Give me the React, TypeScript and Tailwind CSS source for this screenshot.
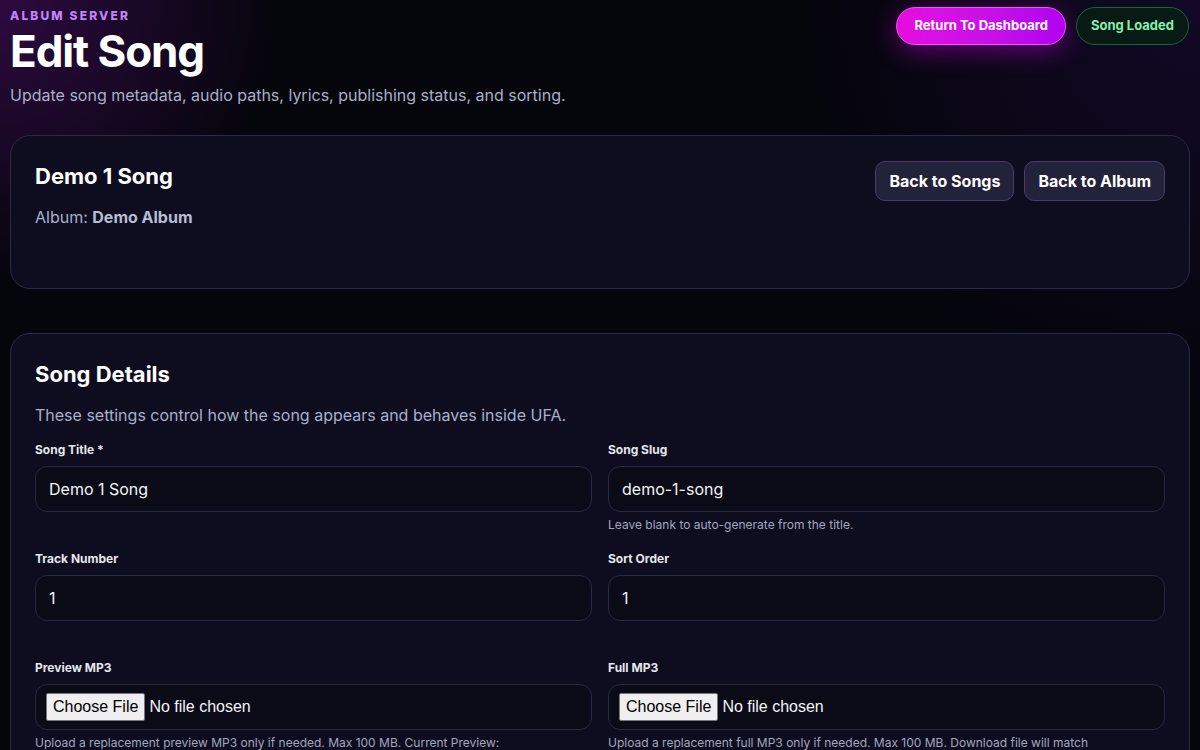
import React from "react";

const Field = ({ label, value, hint }: { label: string; value: string; hint?: string }) => (
  <div className="flex flex-col">
    <label className="text-[12px] font-bold text-[#e5e7eb] mb-[7px]">{label}</label>
    <div className="h-[46px] rounded-xl border border-[#262a40] bg-[#0a0b16] px-[13px] flex items-center text-[16px] text-[#f3f4f6]">
      {value}
    </div>
    {hint && <p className="text-[12px] text-[#a1a6bd] mt-[4px]">{hint}</p>}
  </div>
);

const FileField = ({ label, hint }: { label: string; hint: string }) => (
  <div className="flex flex-col">
    <label className="text-[12px] font-bold text-[#e5e7eb] mb-[7px]">{label}</label>
    <div className="h-[46px] rounded-xl border border-[#262a40] bg-[#0a0b16] px-[10px] flex items-center text-[16px] text-[#f3f4f6]" style={{ fontFamily: "'Liberation Sans', Arial, sans-serif" }}>
      <span className="bg-[#efefef] text-black border border-[#767676] rounded-[2px] px-[6px] py-[1px] mr-[4px]">Choose File</span>
      No file chosen
    </div>
    <p className="text-[12px] text-[#a1a6bd] mt-[4px] whitespace-nowrap overflow-hidden">{hint}</p>
  </div>
);

export default function App() {
  return (
    <div
      className="min-h-[750px] h-[750px] overflow-hidden bg-[#05050c] px-[10px] text-white"
      style={{
        fontFamily: "Inter, 'Noto Sans', sans-serif",
        backgroundImage:
          "radial-gradient(circle at 0% 0%, rgba(120,20,160,0.35), transparent 280px), radial-gradient(circle at 100% 0%, rgba(60,20,120,0.25), transparent 400px)",
      }}
    >
      <header className="flex justify-between items-start pt-[7px]">
        <div>
          <div className="text-[12px] font-extrabold tracking-[0.18em] text-[#c084fc]">ALBUM SERVER</div>
          <h1 className="text-[44px] font-bold leading-[52px] tracking-tight mt-[0px]">Edit Song</h1>
          <p className="text-[16px] text-[#a9b0c8] mt-[6px]">Update song metadata, audio paths, lyrics, publishing status, and sorting.</p>
        </div>
        <div className="flex gap-[10px] pt-[0px] mr-[1px]">
          <button className="h-[38px] px-[17px] rounded-full bg-gradient-to-r from-[#e60be0] to-[#b000f0] border border-[#f052f5] text-[13px] font-bold shadow-[0_6px_24px_rgba(200,0,220,0.45)]">
            Return To Dashboard
          </button>
          <button className="h-[38px] px-[14px] rounded-full bg-[#081a14] border border-[#166534] text-[13px] font-bold text-[#86efac]">
            Song Loaded
          </button>
        </div>
      </header>

      <section className="mt-[28px] h-[154px] rounded-[20px] border border-[#2a2a44] bg-[#0e0d20] px-[24px] pt-[24px] flex justify-between items-start">
        <div>
          <h2 className="text-[22px] font-bold">Demo 1 Song</h2>
          <p className="text-[16px] text-[#a9b0c8] mt-[12px]">
            Album: <strong className="font-bold text-[#b7bdd2]">Demo Album</strong>
          </p>
        </div>
        <div className="flex gap-[10px] mt-[1px]">
          <button className="h-[40px] px-[13px] rounded-[10px] bg-[#22223a] border border-[#4a3a6a] text-[16px] font-bold">Back to Songs</button>
          <button className="h-[40px] px-[13px] rounded-[10px] bg-[#22223a] border border-[#4a3a6a] text-[16px] font-bold">Back to Album</button>
        </div>
      </section>

      <section className="mt-[44px] rounded-[20px] border border-[#2a2a44] bg-[#0e0d20] px-[24px] pt-[24px] pb-[40px]">
        <h2 className="text-[22px] font-bold">Song Details</h2>
        <p className="text-[16px] text-[#a9b0c8] mt-[12px] mb-[14px]">These settings control how the song appears and behaves inside UFA.</p>
        <div className="grid grid-cols-2 gap-x-[16px] gap-y-[38px]">
          <Field label="Song Title *" value="Demo 1 Song" />
          <Field label="Song Slug" value="demo-1-song" hint="Leave blank to auto-generate from the title." />
          <div className="-mt-[22px]"><Field label="Track Number" value="1" /></div>
          <div className="-mt-[22px]"><Field label="Sort Order" value="1" /></div>
          <FileField label="Preview MP3" hint="Upload a replacement preview MP3 only if needed. Max 100 MB. Current Preview:" />
          <FileField label="Full MP3" hint="Upload a replacement full MP3 only if needed. Max 100 MB. Download file will match" />
        </div>
      </section>
    </div>
  );
}
